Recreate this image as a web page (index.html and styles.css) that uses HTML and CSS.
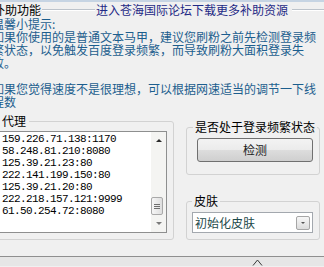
FILE: index.html
```html
<!DOCTYPE html>
<html lang="zh-CN">
<head>
<meta charset="utf-8">
<title>补助功能</title>
<link rel="stylesheet" href="styles.css">
</head>
<body>
<div class="strip"></div>
<div class="titlebar">
  <span class="title">补助功能</span>
  <span class="rule rule-short"></span>
  <a class="link">进入苍海国际论坛下载更多补助资源</a>
  <span class="rule rule-fill"></span>
</div>
<div class="tips">
  <p>温馨小提示:</p>
  <p>如果你使用的是普通文本马甲，建议您刷粉之前先检测登录频<br>繁状态，以免触发百度登录频繁，而导致刷粉大面积登录失<br>败。</p>
  <p class="gap">如果您觉得速度不是很理想，可以根据网速适当的调节一下线<br>程数</p>
</div>
<div class="main">
  <fieldset class="group proxy">
    <legend>代理</legend>
    <div class="listbox">
      <ul class="items">
        <li>159.226.71.138:1170</li>
        <li>58.248.81.210:8080</li>
        <li>125.39.21.23:80</li>
        <li>222.141.199.150:80</li>
        <li>125.39.21.20:80</li>
        <li>222.218.157.121:9999</li>
        <li>61.50.254.72:8080</li>
      </ul>
      <div class="vscroll">
        <span class="arrow-cell"><span class="arrow up"></span></span>
        <span class="track"><span class="thumb"><span class="grip"></span></span></span>
        <span class="arrow-cell"><span class="arrow down"></span></span>
      </div>
    </div>
  </fieldset>
  <div class="side">
    <fieldset class="group check">
      <legend>是否处于登录频繁状态</legend>
      <button class="btn" type="button">检测</button>
    </fieldset>
    <fieldset class="group skin">
      <legend>皮肤</legend>
      <div class="combo"><span class="combo-text">初始化皮肤</span><span class="drop"><span class="drop-arrow"></span></span></div>
    </fieldset>
  </div>
</div>
<div class="statusbar">
  <svg class="chevron" width="11" height="7" viewBox="0 0 11 7"><polyline points="1,6.5 5.5,1 10,6.5" fill="none" stroke="#3a3a3a" stroke-width="1"/></svg>
</div>
</body>
</html>
```
FILE: styles.css
```css
html, body {
  margin: 0;
  padding: 0;
}
body {
  width: 324px;
  height: 267px;
  overflow: hidden;
  background: #f0f0f0;
  font-family: "Noto Sans CJK SC", "Noto Sans", sans-serif;
  font-size: 12px;
  color: #000;
}
.strip {
  height: 2px;
  background: #c6d4e3;
}
.titlebar {
  display: flex;
  align-items: center;
  height: 15px;
  margin-left: -7px;
  line-height: 14px;
}
.title {
  color: #000;
}
.rule {
  height: 0;
  border-top: 1px solid #bcc3cb;
  border-bottom: 1px solid #ffffff;
}
.rule-short {
  width: 53px;
  margin: 0 1px;
}
.rule-fill {
  flex: 1;
  margin-left: 4px;
}
.link {
  color: #1f2a86;
  text-decoration: none;
}
.tips {
  margin-left: -8px;
  color: #1c5e8e;
  line-height: 13px;
}
.tips p {
  margin: 0;
  white-space: nowrap;
}
.tips p.gap {
  margin-top: 13px;
}
.main {
  display: flex;
  align-items: flex-start;
  margin-top: 6px;
}
.group {
  box-sizing: border-box;
  min-width: 0;
  margin: 0;
  border: 1px solid #d2d2d2;
  border-radius: 3px;
}
.group legend {
  padding: 0 2px;
  line-height: 14px;
  white-space: nowrap;
  color: #000;
}
.proxy {
  width: 180px;
  margin-left: -6px;
  padding: 3px 6px 6px 4px;
}
.proxy legend {
  padding: 0 3px;
}
.listbox {
  box-sizing: border-box;
  display: flex;
  width: 168px;
  height: 102px;
  border: 1px solid #8e8f8f;
  background: #ffffff;
}
.items {
  flex: 1;
  margin: 0;
  padding: 1px 0 0 2px;
  list-style: none;
  font-family: "Liberation Mono", "DejaVu Sans Mono", monospace;
  font-size: 11px;
  letter-spacing: -0.6px;
  line-height: 12px;
  color: #000;
}
.vscroll {
  display: flex;
  flex-direction: column;
  width: 15px;
  background: #f4f4f2;
}
.arrow-cell {
  display: flex;
  align-items: center;
  justify-content: center;
  height: 17px;
}
.arrow {
  width: 0;
  height: 0;
  border-left: 3px solid transparent;
  border-right: 3px solid transparent;
}
.arrow.up {
  border-bottom: 3px solid #2a2a2a;
}
.arrow.down {
  border-top: 3px solid #7a7a7a;
}
.track {
  flex: 1;
}
.thumb {
  box-sizing: border-box;
  display: flex;
  align-items: center;
  justify-content: center;
  width: 12px;
  height: 18px;
  margin-top: 48px;
  border: 1px solid #a9a9a9;
  border-radius: 2px;
  background: linear-gradient(90deg, #f6f6f6, #dedede);
}
.grip {
  width: 6px;
  height: 5px;
  background: repeating-linear-gradient(#6e6e6e 0 1px, transparent 1px 2px);
}
.side {
  display: flex;
  flex-direction: column;
  width: 134px;
  margin-left: 12px;
}
.check {
  margin-top: 6px;
  padding: 4px 6px 12px 6px;
}
.btn {
  box-sizing: border-box;
  display: block;
  width: 116px;
  height: 24px;
  margin: 0 0 0 4px;
  padding: 0;
  border: 1px solid #707070;
  border-radius: 3px;
  background: linear-gradient(#f3f3f3, #ebebeb 50%, #dddddd 50%, #cfcfcf);
  font-family: inherit;
  font-size: 12px;
  color: #1a1a1a;
  line-height: 20px;
}
.skin {
  margin-top: 19px;
  padding: 4px 6px 6px 5px;
}
.combo {
  box-sizing: border-box;
  display: flex;
  align-items: center;
  width: 121px;
  height: 21px;
  padding-left: 2px;
  border: 1px solid #a3a8ae;
  background: #ffffff;
}
.combo-text {
  color: #1d4a4a;
  line-height: 14px;
}
.drop {
  box-sizing: border-box;
  display: flex;
  align-items: center;
  justify-content: center;
  width: 14px;
  height: 14px;
  margin-left: auto;
  margin-right: 2px;
  border: 1px solid #a6a6a6;
  border-radius: 2px;
  background: linear-gradient(#f7f7f7, #dcdcdc);
}
.drop-arrow {
  width: 0;
  height: 0;
  border-left: 2px solid transparent;
  border-right: 2px solid transparent;
  border-top: 2px solid #555;
}
.statusbar {
  display: flex;
  margin-top: 16px;
  height: 9px;
  border-top: 1px solid #8f8f8f;
  background: #e6e6e6;
  padding-left: 252px;
}
.chevron {
  display: block;
  margin-top: 2px;
}
```
